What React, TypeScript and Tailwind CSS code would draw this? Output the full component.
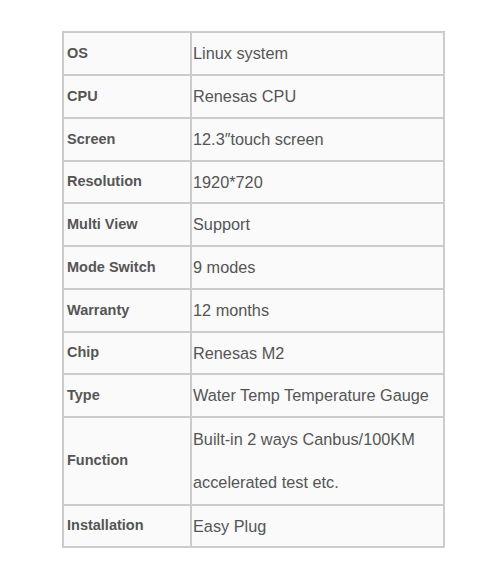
const rows: { label: string; value: string[]; h: string }[] = [
  { label: "OS", value: ["Linux system"], h: "h-[41px]" },
  { label: "CPU", value: ["Renesas CPU"], h: "h-[43px]" },
  { label: "Screen", value: ["12.3\u2033touch screen"], h: "h-[43px]" },
  { label: "Resolution", value: ["1920*720"], h: "h-[42px]" },
  { label: "Multi View", value: ["Support"], h: "h-[43px]" },
  { label: "Mode Switch", value: ["9 modes"], h: "h-[43px]" },
  { label: "Warranty", value: ["12 months"], h: "h-[43px]" },
  { label: "Chip", value: ["Renesas M2"], h: "h-[42px]" },
  { label: "Type", value: ["Water Temp Temperature Gauge"], h: "h-[43px]" },
  {
    label: "Function",
    value: ["Built-in 2 ways Canbus/100KM", "accelerated test etc."],
    h: "h-[88px]",
  },
  { label: "Installation", value: ["Easy Plug"], h: "h-[42px]" },
];

export default function App() {
  return (
    <div
      className="w-[500px] h-[584px] bg-white pt-[31px] pl-[62px]"
      style={{ fontFamily: '"Liberation Sans", Arial, sans-serif' }}
    >
      <div className="w-[383px] border-2 border-[#cccccc] bg-[#fafafa] text-[#555555]">
        {rows.map((row, i) => (
          <div
            key={row.label}
            className={`flex ${row.h} ${i > 0 ? "border-t-2 border-[#cccccc]" : ""}`}
          >
            <div className="w-[128px] shrink-0 border-r-2 border-[#cccccc] flex items-center pl-[3px] text-[14.5px] font-bold">
              {row.label}
            </div>
            <div className="flex-1 flex flex-col justify-center pl-[1px] text-[16.3px]">
              {row.value.map((line) => (
                <div key={line} className="h-[43px] flex items-center">
                  {line}
                </div>
              ))}
            </div>
          </div>
        ))}
      </div>
    </div>
  );
}
